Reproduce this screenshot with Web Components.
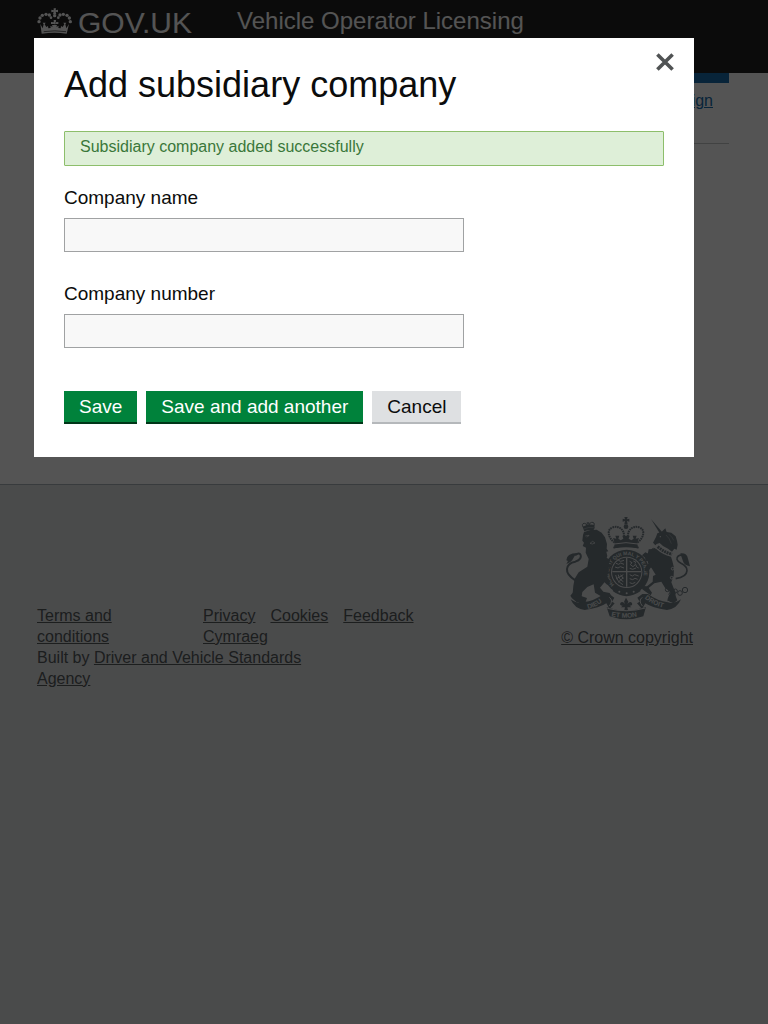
<!DOCTYPE html>
<html lang="en">
<head>
<meta charset="utf-8">
<meta name="viewport" content="width=device-width, initial-scale=1">
<title>Add subsidiary company - Vehicle Operator Licensing</title>
<style>
body { margin: 0; font-family: "Liberation Sans", Arial, sans-serif; color: #0b0c0c; background: #fff; }
</style>
</head>
<body>
<vol-page>
  <vol-header slot="header">Vehicle Operator Licensing</vol-header>
  <vol-account-bar></vol-account-bar>
  <vol-footer slot="footer"></vol-footer>
  <vol-modal slot="modal" heading="Add subsidiary company">
    <vol-alert>Subsidiary company added successfully</vol-alert>
    <vol-company-form></vol-company-form>
  </vol-modal>
</vol-page>

<template id="page">
  <style>
    :host { display: flex; flex-direction: column; min-height: 100vh; }
    main { display: block; padding: 0 39px 340px; }
    .foot { flex: 1; display: grid; }
  </style>
  <slot name="header"></slot>
  <main><slot></slot></main>
  <div class="foot"><slot name="footer"></slot></div>
  <slot name="modal"></slot>
</template>

<template id="header">
  <style>
    :host { display: block; background: #0b0c0c; color: #fff; }
    header { display: flex; align-items: flex-start; padding: 4px 37px 31px; }
    a { display: flex; width: 200px; color: inherit; text-decoration: none; font-size: 30px; line-height: 38px; }
    svg { width: 35px; height: 27px; margin: 4px 6px 0 0; }
    .title { font-size: 24px; line-height: 34px; }
  </style>
  <header>
    <a href="#">
      <svg viewBox="110 23 105 81" fill="#fff" aria-hidden="true">
        <path d="M160 24h7l-1 6 7-2v8l-7-2 2 8h-10l2-8-7 2v-8l7 2z"/>
        <circle cx="163" cy="46" r="5"/>
        <circle cx="152" cy="52" r="4"/><circle cx="174" cy="52" r="4"/>
        <circle cx="147" cy="44" r="5"/><circle cx="137" cy="42" r="5"/>
        <circle cx="126" cy="45" r="5"/><circle cx="119" cy="53" r="5"/>
        <circle cx="116" cy="64" r="5"/>
        <circle cx="179" cy="44" r="5"/><circle cx="189" cy="42" r="5"/>
        <circle cx="200" cy="45" r="5"/><circle cx="207" cy="53" r="5"/>
        <circle cx="210" cy="64" r="5"/>
        <path d="M120 71l7 13 3-12-3-5h9l-3 5 5 8 5-3 1 7 7-1-1-6 7 2-2-5h15l-2 5 7-2-1 6 7 1 1-7 5 3 5-8-3-5h9l-3 5 3 12 8-13-7 29q-36-5-75 0z"/>
        <path d="M160 59h7l-1 13h-5zM152 65l9 1v4l-9 1zM174 65l-9 1v4l9 1z"/>
        <path d="M130 94q33-5 67 0" fill="none" stroke="#0b0c0c" stroke-width="2"/>
      </svg>
      <span>GOV.UK</span>
    </a>
    <span class="title"><slot></slot></span>
  </header>
</template>

<template id="account">
  <style>
    :host { display: block; border-top: 10px solid #005ea5; border-bottom: 1px solid #bfc1c3; }
    nav { display: flex; justify-content: flex-end; padding: 7px 16px 32px; font-size: 16px; line-height: 21px; }
    a { color: #005ea5; }
  </style>
  <nav aria-label="Account"><a href="#">Sign</a></nav>
</template>

<template id="footer">
  <style>
    :host { display: block; background: #dee0e2; border-top: 1px solid #a1acb2; color: #454a4c; font-size: 16px; line-height: 21px; }
    footer { display: flex; justify-content: space-between; align-items: flex-start; padding: 31px 75px 0 37px; }
    .meta { padding-top: 89px; }
    .links { display: grid; grid-template-columns: 136px 240px; column-gap: 30px; }
    .links > :first-child { padding-right: 30px; }
    ul { list-style: none; margin: 0; padding: 0; display: flex; flex-wrap: wrap; column-gap: 15px; }
    p { margin: 0; max-width: 300px; }
    a { color: inherit; }
    .crown { display: flex; flex-direction: column; align-items: center; }
    .crown vol-crest { margin-bottom: 7px; }
  </style>
  <footer>
    <div class="meta">
      <div class="links">
        <div><a href="#">Terms and conditions</a></div>
        <ul>
          <li><a href="#">Privacy</a></li>
          <li><a href="#">Cookies</a></li>
          <li><a href="#">Feedback</a></li>
          <li><a href="#">Cymraeg</a></li>
        </ul>
      </div>
      <p>Built by <a href="#">Driver and Vehicle Standards Agency</a></p>
    </div>
    <a class="crown" href="#"><vol-crest></vol-crest>© Crown copyright</a>
  </footer>
</template>

<template id="crest">
  <style>
    :host { display: block; color: #616f76; }
    svg { display: block; width: 125px; height: 104px; }
    text { font-family: "Liberation Sans", Arial, sans-serif; font-weight: bold; }
  </style>
  <svg viewBox="45 123 375 312" fill="currentColor" aria-hidden="true">
    <defs>
      <path id="ring" d="M193 329A52 52 0 1 1 267 329"/>
      <path id="dieu" d="M114 402Q142 396 168 370"/>
      <path id="mon" d="M184 424Q228 433 274 422"/>
      <path id="droit" d="M284 370Q310 393 350 401"/>
    </defs>
    <!-- imperial crown -->
    <path d="M223 126h10l-2 7 7-2v9l-7-2 2 10h-10l2-10-7 2v-9l7 2z"/>
    <circle cx="228" cy="155" r="7"/>
    <g fill="none" stroke="currentColor" stroke-width="6" stroke-dasharray="5 2">
      <path d="M194 203C174 188 169 164 188 157C208 151 224 164 222 187"/>
      <path d="M262 203C282 188 287 164 268 157C248 151 232 164 234 187"/>
    </g>
    <path d="M194 202l-5-13 10 2-3-9h12l-3 9 7 5 8-5-3-9h22l-3 9 8 5 7-5-3-9h12l-3 9 10-2-5 13 2 18q-36-7-72 0z"/>
    <path d="M192 207q36-8 72 0" fill="none" stroke="#dee0e2" stroke-width="3"/>
    <path d="M190 218q38-10 76 0" fill="none" stroke="currentColor" stroke-width="5"/>
    <!-- garter and shield -->
    <circle cx="230" cy="292" r="68"/>
    <circle cx="230" cy="292" r="47" fill="#dee0e2"/>
    <circle cx="230" cy="292" r="44"/>
    <path d="M230 249v86M187 290h86" stroke="#dee0e2" stroke-width="4"/>
    <g fill="none" stroke="#dee0e2" stroke-width="3">
      <path d="M198 265l8 3 6-4 10 4M195 276l9 3 7-4 11 4M205 256l7 3 10-3"/>
      <path d="M239 259l7 4-5 6 8 6 8-7 3 8 6 3M250 258l8 4-4 4M239 280l9 3 10-4"/>
      <path d="M197 300q4 20 22 29M205 299q1 14 15 21M212 299l8 12M198 312l22-13M204 322l16-14"/>
      <path d="M239 299l8 4 7-4 12 4M239 311l9 3 7-4 8 3M239 323l8 3 9-4"/>
    </g>
    <text font-size="15" fill="#dee0e2"><textPath href="#ring">HONI SOIT QUI MAL Y PENSE</textPath></text>
    <path d="M188 348q41 31 84 0l-5-8q-38 20-74 0z"/>
    <g fill="#dee0e2"><circle cx="208" cy="350" r="3"/><circle cx="230" cy="355" r="3"/><circle cx="251" cy="350" r="3"/></g>
    <!-- lion -->
    <path d="M101 164l-3-9q18-9 35-5l1 9-5 9q-13-5-26 1z"/>
    <g fill="none" stroke="currentColor" stroke-width="3">
      <path d="M100 157q-7-11 3-12 8 0 9 10M117 153q0-10 8-11 10-1 7 10M114 154v-12M110 144h8"/>
    </g>
    <path d="M101 162q15-7 30-4" fill="none" stroke="#dee0e2" stroke-width="1"/>
    <path d="M99 180l3-9 20-6 18-1 15 9 10 14 6 20-1 14 5 8-6 1 3 13-7 18 12 21-8 33-19 23 10 12 19 4 7 13-24 2-27-16-4-25-19 8-15 15-3 19 15 10 2 7-17 1-14-9-12-24 2-23 4-21 12-19 26-17 4-23-9-19 1-15-10-5 4-10-5-6z"/>
    <path d="M150 252l17-5 14 8-5 12 12 3-9 9-20-3-9-11zM145 290l24 10 12 21-9 9-18-17z"/>
    <path d="M106 183l11-2-6 6M120 205l8-6 7 5-8 3z" fill="none" stroke="#dee0e2" stroke-width="2"/>
    <path d="M77 317q-28-18-26-35q2-18 25-22q20-7 16-20q-4-10-17 1" fill="none" stroke="currentColor" stroke-width="6"/>
    <path d="M49 256q0-21 33-22q-10 7-12 16q-6 13-21 17l5-9z"/>
    <path d="M61 362l12-15 18 15 20 7-3 9-12 4-16 0-14-12z"/>
    <!-- unicorn -->
    <path d="M303 132l34 40-7 4z"/>
    <path d="M309 203l9-17 4-11 13-5 11-10 4 11 14 2 13 11 4 13 2 12-3 15-7-3-7 9-12-9-15-8-10-9-9 3-4 4z"/>
    <circle cx="331" cy="185" r="2" fill="#dee0e2"/>
    <path d="M348 180q11 9 16 26M357 178q11 9 14 18" fill="none" stroke="#dee0e2" stroke-width="1"/>
    <path d="M323 215q20 17 43 23" fill="none" stroke="currentColor" stroke-width="9" stroke-dasharray="6 2"/>
    <path d="M318 221q20 18 45 24l4 13 5 20-1 24-7 20 7 18 6 12-1 14-9 9-15 4 3-14 8-12-18-15-11-18-21 5-17 14 10 14-4 8-17-12-9-7 3-9 12 1 17-14 1-17 8-4-12-19-11-17-2-20 4-20z"/>
    <path d="M276 241l10-9 13 6 16-7 17 10-5 13-14-6-13 1-5 10-8-1-2-10zM285 279l14-18 22-4-5 15-14 6-7 11-11-1z"/>
    <path d="M377 311q33-5 34-24q1-12-18-22q-20-12-8-22q8-6 17 1" fill="none" stroke="currentColor" stroke-width="5"/>
    <path d="M391 235q20-2 23 16l6 23q-18-3-21-15z"/>
    <path d="M361 353l15 8 6 15-11 9-12-5-7-8 8-7z"/>
    <g fill="none" stroke="currentColor" stroke-width="3">
      <circle cx="304" cy="239" r="6"/><circle cx="311" cy="226" r="6"/><circle cx="352" cy="344" r="6"/>
      <circle cx="364" cy="358" r="7"/><circle cx="376" cy="348" r="6"/><circle cx="390" cy="354" r="7"/><circle cx="405" cy="345" r="8"/>
    </g>
    <g fill="none" stroke="#dee0e2" stroke-width="3"><circle cx="368" cy="281" r="4"/><circle cx="365" cy="308" r="4"/></g>
    <!-- motto ribbon -->
    <path d="M62 373q21 15 39 9 31-4 60-25l17 0 15 11-7 12 8 5-15 17-10-17q-20 14-65 20-31-4-42-32z"/>
    <path d="M393 373q-21 15-39 9-31-4-60-25l-17 0-15 11 7 12-8 5 15 17 10-17q20 14 65 20 31-4 42-32z"/>
    <path d="M170 397q58 20 118-1l-8 28q-51 18-101 0z"/>
    <path d="M178 367q13 9 0 26M277 367q-13 9 0 26M172 400q58 15 114-1" fill="none" stroke="#dee0e2" stroke-width="3"/>
    <path d="M228 368l7 12-3 7q8-11 14-3 3 8-7 8l5 5h-12l2 8h-11l2-8h-12l5-5q-10 0-7-8 6-8 14 3l-3-7z"/>
    <g fill="#dee0e2" font-size="20">
      <text><textPath href="#dieu">DIEU</textPath></text>
      <text><textPath href="#mon">ET MON</textPath></text>
      <text><textPath href="#droit">DROIT</textPath></text>
    </g>
  </svg>
</template>

<template id="modal">
  <style>
    :host { position: fixed; inset: 0; overflow: auto; background: rgba(11, 12, 12, .7); }
    section { display: grid; grid-template-columns: 1fr auto; box-sizing: border-box; width: calc(100% - 68px); max-width: 660px; margin: 38px 34px; padding: 14px 19px 33px 30px; background: #fff; }
    h1 { margin: 12px 0 25px; font-size: 36px; line-height: 42px; font-weight: normal; }
    button { display: block; width: 20px; height: 20px; padding: 0; border: 0; background: none; color: #505354; }
    svg { display: block; }
    .body { grid-column: 1 / -1; padding-right: 11px; }
  </style>
  <section role="dialog" aria-modal="true" aria-labelledby="heading">
    <h1 id="heading"></h1>
    <button type="button" aria-label="Close">
      <svg width="20" height="20" viewBox="0 0 20 20" fill="none" stroke="currentColor" stroke-width="3.6"><path d="M2.4 2.4l15.2 15.2M17.6 2.4L2.4 17.6"/></svg>
    </button>
    <div class="body"><slot></slot></div>
  </section>
</template>

<template id="alert">
  <style>
    :host { display: block; padding: 4px 15px 8px; border: 1px solid #8dbe6b; border-radius: 1px; background: #deefd8; color: #3a773a; font-size: 16px; line-height: 21px; }
  </style>
  <div role="status"><slot></slot></div>
</template>

<template id="form">
  <style>
    :host { display: block; margin-top: 20px; font-size: 19px; line-height: 24px; }
    .field { margin-bottom: 30px; }
    label { display: block; margin-bottom: 8px; }
    input { display: block; box-sizing: border-box; width: 100%; max-width: 400px; height: 34px; padding: 4px; border: 1px solid #a0a2a3; border-radius: 0; background: #f8f8f8; font: inherit; }
    .actions { display: flex; flex-wrap: wrap; gap: 9px; padding-top: 13px; }
    button { padding: 4px 15px 3px; border: 0; border-bottom: 2px solid #003618; background: #00823b; color: #fff; font: inherit; }
    .secondary { border-color: #b5b8bb; background: #dee0e2; color: #0b0c0c; }
  </style>
  <form>
    <div class="field"><label for="name">Company name</label><input id="name" type="text"></div>
    <div class="field"><label for="number">Company number</label><input id="number" type="text"></div>
    <div class="actions">
      <button type="button">Save</button>
      <button type="button">Save and add another</button>
      <button type="button" class="secondary">Cancel</button>
    </div>
  </form>
</template>

<script>
class TemplateElement extends HTMLElement {
  constructor() {
    super();
    const template = document.getElementById(this.constructor.template);
    this.attachShadow({ mode: "open" }).append(template.content.cloneNode(true));
  }
}
customElements.define("vol-page", class extends TemplateElement { static template = "page"; });
customElements.define("vol-header", class extends TemplateElement { static template = "header"; });
customElements.define("vol-account-bar", class extends TemplateElement { static template = "account"; });
customElements.define("vol-crest", class extends TemplateElement { static template = "crest"; });
customElements.define("vol-footer", class extends TemplateElement { static template = "footer"; });
customElements.define("vol-alert", class extends TemplateElement { static template = "alert"; });
customElements.define("vol-company-form", class extends TemplateElement { static template = "form"; });
customElements.define("vol-modal", class extends TemplateElement {
  static template = "modal";
  connectedCallback() {
    this.shadowRoot.querySelector("h1").textContent = this.getAttribute("heading");
    this.shadowRoot.querySelector("button").addEventListener("click", () => this.remove());
  }
});
</script>
</body>
</html>
